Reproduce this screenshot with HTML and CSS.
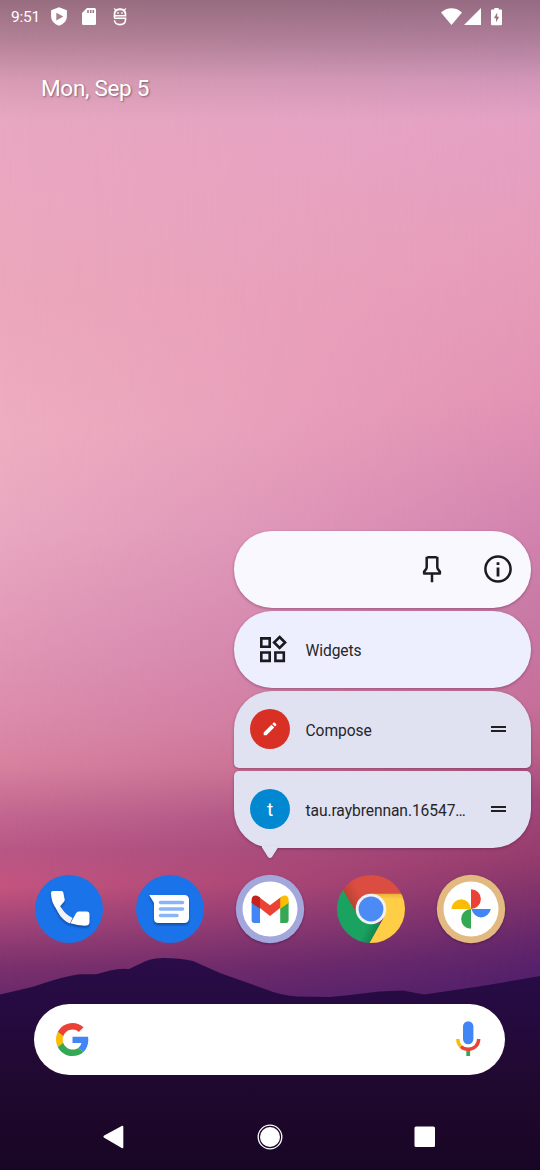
FILE: index.html
```html
<!DOCTYPE html>
<html lang="en">
<head>
<meta charset="utf-8">
<title>Home screen</title>
<link rel="stylesheet" href="styles.css">
</head>
<body>
<div class="phone">
  <div class="wallpaper">
    <div class="sky-right"></div>
    <svg class="hills" viewBox="0 0 540 1170">
      <defs><linearGradient id="hill" x1="0" y1="0" x2="0" y2="1">
        <stop offset="0" stop-color="#2a0c48"/><stop offset=".3" stop-color="#240a3e"/><stop offset=".6" stop-color="#20092f"/><stop offset="1" stop-color="#180524"/>
      </linearGradient></defs>
      <path fill="url(#hill)" d="M0 994.5 34 986.5 Q55 979 72 975.500 C82 973 88 975 97 974 L110 970.500 Q120 968 129 969 L146 961 Q153 958 164 958 Q180 958 193 961 L220 973 262 988 Q282 996 298 996.500 Q314 996.500 330 997 L350 995 379 991.500 403 990.500 424 994.500 482 986 540 976 V1170 H0Z"/>
    </svg>
    <div class="scrim"></div>
  </div>

  <header class="status">
    <span class="clock">9:51</span>
    <svg class="st-shield" width="16" height="19" viewBox="0 0 16 19"><path fill="#fff" d="M8 .3 15.900 3.200V9c0 4.600-3 8-7.900 9.800C3.100 17 .1 13.600.1 9V3.200Z"/><path fill="#a8808f" d="M5.300 5.800v7.600l7-3.800z"/></svg>
    <svg class="st-card" width="14" height="17" viewBox="0 0 14 17"><path fill="#fff" d="M5 0h7.500Q14 0 14 1.500v14Q14 17 12.500 17h-11Q0 17 0 15.500V5z"/><path stroke="#a17a89" stroke-width="1.600" d="M6 2v3M8.700 2v3M11.300 2v3"/></svg>
    <svg class="st-bug" width="14" height="18" viewBox="0 0 14 18"><path fill="#fff" d="M1.200 0 2.800 1.300Q4.600.3 7 .3T11.200 1.300L12.800 0 13.300.6 12.100 2.200Q13.300 3.600 13.300 5.700V8.400H.7V5.700Q.7 3.600 1.900 2.200L.7.600z"/><path fill="#a17a89" d="M2.300 6.900Q2.300 2.300 7 2.300t4.700 4.600z"/><path fill="#fff" d="M4.200 4.300h1.600v1.400H4.200zM8.200 4.300h1.600v1.400H8.200z"/><path fill="none" stroke="#fff" stroke-width="1.600" d="M1.500 8v1.400q0 .8.8.8h10.200v1.500c0 3-2.200 4.900-5.500 4.900s-5.500-1.900-5.500-4.300"/></svg>
    <span class="spacer"></span>
    <svg class="st-wifi" width="21" height="17" viewBox="0 0 21 17"><path fill="#fff" d="M0 4.600C6-1.300 15-1.300 21 4.600L10.500 17z"/></svg>
    <svg class="st-cell" width="17" height="17" viewBox="0 0 17 17"><path fill="#fff" d="M17 0v17H0z"/></svg>
    <svg class="st-batt" width="11" height="18" viewBox="0 0 11 18"><path fill="#fff" d="M3.300 0h4.400v1.500H10q1 0 1 1v13.700q0 1-1 1H1q-1 0-1-1V2.500q0-1 1-1h2.300z"/><path fill="#997583" d="M6.200 4.500 2.900 10.300H5V14.300L8.200 8.700H6.200z"/></svg>
  </header>

  <div class="date">Mon, Sep 5</div>

  <div class="popup">
    <div class="card card-top">
      <svg width="30" height="30" viewBox="0 0 30 30" fill="none" stroke="#1b1c1f" stroke-width="2.500"><path d="M10.300 3.300h9.400M9.700 2.800v10.400c0 2-1.400 2.800-2.600 4.500v1.700h15.800v-1.700c-1.200-1.700-2.600-2.500-2.600-4.500V2.800M15 19.500v8.800" stroke-linejoin="round"/></svg>
      <svg width="30" height="30" viewBox="0 0 30 30" fill="none" stroke="#1b1c1f" stroke-width="2.500"><circle cx="15" cy="15" r="12.600"/><path d="M15 13.500v9M15 8.200v2.900" stroke-width="2.800"/></svg>
    </div>
    <div class="card card-widgets">
      <span class="lead"><svg width="32" height="32" viewBox="0 0 32 32" fill="none" stroke="#191b1e" stroke-width="2.600"><path d="M4.300 5.400h8.400v8.400H4.300zM4.300 19.500h8.400v8.400H4.300zM18.400 19.500h8.400v8.400h-8.400zM22.600 4l5.500 5.500-5.500 5.500-5.500-5.500z"/></svg></span>
      <span class="label">Widgets</span>
    </div>
    <div class="card card-compose">
      <span class="lead disc red"><svg width="14" height="14" viewBox="0 0 14 14"><path fill="#fff" d="M.7 10.400 8.500 2.700l2.700 2.700-7.700 7.800H.7zM9.300 1.900l1.100-1.100q.7-.6 1.400 0l1.300 1.300q.6.700 0 1.400L12 4.600z"/></svg></span>
      <span class="label">Compose</span>
      <span class="grip"></span>
    </div>
    <div class="card card-account">
      <span class="lead disc blue">t</span>
      <span class="label">tau.raybrennan.16547…</span>
      <span class="grip"></span>
    </div>
    <svg class="tail" width="18" height="13" viewBox="0 0 18 13"><path fill="#e0e1f1" d="M1 0h16v1.500L11.300 10.500Q9 13.700 6.700 10.500L1 1.500z"/></svg>
  </div>

  <main class="dock">
    <svg class="app" viewBox="0 0 70 70">
      <circle cx="35" cy="35" r="34" fill="#1a73e8"/>
      <g class="drop"><path fill="#f1f2f4" d="M22.500 35.500 26 32c4 6 7 9 12.500 12l-2.500 5.500C30 47 25.500 42 22.500 35.500z"/><path fill="#fff" d="M19 17h8.500q1.500 0 1.800 1.500l1.400 7q.2 1.300-.7 2.200L23 36C19 31 17 25 17 19q0-2 2-2zM36.500 49.300l5.500-10q1-1.700 2.500-1.700h8q3 0 3 3v7.500q-.2 3.400-3 3.500-8 .3-16-2.300z"/></g>
    </svg>
    <svg class="app" viewBox="0 0 70 70">
      <circle cx="35" cy="35" r="34" fill="#1a73e8"/>
      <path class="drop" fill="#fff" d="M14.200 21H49q5 0 5 5v18q0 5-5 5H23.500q-4.500 0-4.500-4.500V29z"/>
      <path stroke="#8ab4f8" stroke-width="3.600" stroke-linecap="round" d="M25.500 28.500h22M25.500 35h22M25.500 41.500h16.500"/>
    </svg>
    <svg class="app ring" viewBox="0 0 70 70">
      <circle cx="35" cy="35" r="34.200" fill="#a4a7db"/><circle cx="35" cy="35" r="27.500" fill="#fff"/>
      <path fill="#4285f4" d="M16.600 27.500 25 34v15h-6q-2.400 0-2.400-2.400z"/><path fill="#34a853" d="M53.600 27.500 45.200 34v15h6q2.400 0 2.400-2.400z"/>
      <path fill="#ea4335" d="M24 23 35 31.200 46 23v10.300L35 42 24 33.300z"/>
      <path fill="#c5221f" d="M16.600 29v-3.300c0-4 4-5.400 7-3.200L25 23.600v11.100z"/><path fill="#fbbc04" d="M53.600 29v-3.300c0-4-4-5.400-7-3.200l-1.400 1.100v11.100z"/>
    </svg>
    <svg class="app" viewBox="0 0 70 70">
      <defs><clipPath id="disc"><circle cx="35" cy="35" r="34"/></clipPath>
      <linearGradient id="cr" gradientUnits="userSpaceOnUse" x1="12" y1="32" x2="26" y2="24"><stop offset="0" stop-color="#b23f30"/><stop offset="1" stop-color="#da4d40"/></linearGradient>
      <linearGradient id="cg" gradientUnits="userSpaceOnUse" x1="31" y1="51" x2="43" y2="57"><stop offset="0" stop-color="#1aa260"/><stop offset="1" stop-color="#12814b"/></linearGradient>
      <linearGradient id="cy" gradientUnits="userSpaceOnUse" x1="0" y1="19.700" x2="0" y2="25"><stop offset="0" stop-color="#e6b03b"/><stop offset="1" stop-color="#ffcd46"/></linearGradient></defs>
      <g clip-path="url(#disc)"><path fill="url(#cr)" d="M0 0h70v20H35L22 44 6 17z"/><path fill="url(#cg)" d="M7.300 16.500 22 42l13 7h10L33.500 70H0V17z"/><path fill="url(#cy)" d="M35 19.700h35V70H33L47.500 44z"/></g>
      <circle cx="35" cy="35" r="15.300" fill="#f1f1f1"/><circle cx="35" cy="35" r="12.400" fill="#4c8bf5"/>
    </svg>
    <svg class="app ring" viewBox="0 0 70 70">
      <circle cx="35" cy="35" r="34.200" fill="#e3b982"/><circle cx="35" cy="35" r="27.500" fill="#fff"/>
      <path fill="#ea4335" d="M35 15.200a9.900 9.900 0 0 1 0 19.800z"/><path fill="#4285f4" d="M54.800 35a9.900 10.800 0 0 1-19.300 0z"/><path fill="#34a853" d="M35 35v19.800a9.900 9.900 0 0 1 0-19.800z"/><path fill="#fbbc04" d="M15.300 35a9.900 10.800 0 0 1 19.700 0z"/>
    </svg>
  </main>

  <div class="search">
    <svg width="33" height="33" viewBox="0 0 48 48"><path fill="#EA4335" d="M24 9.500c3.540 0 6.710 1.220 9.210 3.600l6.850-6.850C35.900 2.380 30.470 0 24 0 14.620 0 6.510 5.380 2.560 13.220l7.980 6.190C12.430 13.720 17.740 9.500 24 9.500z"/><path fill="#4285F4" d="M46.980 24.550c0-1.570-.15-3.090-.38-4.550H24v9.020h12.940c-.58 2.960-2.260 5.480-4.780 7.180l7.730 6c4.510-4.180 7.090-10.360 7.090-17.650z"/><path fill="#FBBC05" d="M10.530 28.590c-.48-1.450-.76-2.990-.76-4.590s.27-3.140.76-4.590l-7.980-6.190C.92 16.460 0 20.120 0 24c0 3.880.92 7.540 2.560 10.780l7.970-6.190z"/><path fill="#34A853" d="M24 48c6.480 0 11.930-2.130 15.890-5.810l-7.730-6c-2.150 1.450-4.920 2.300-8.160 2.300-6.260 0-11.570-4.220-13.470-9.910l-7.980 6.190C6.510 42.620 14.620 48 24 48z"/></svg>
    <svg width="26" height="36" viewBox="0 0 26 36" fill="none"><rect x="8" y=".3" width="10.400" height="23" rx="5.200" fill="#4285f4"/><path stroke="#34a853" stroke-width="3.800" d="M13.200 29v6"/><path stroke="#ea4335" stroke-width="3.400" d="M23.700 18c0 6-4.500 10.300-10.500 10.300-3 0-5.600-1.100-7.400-2.800"/><path stroke="#fbbc04" stroke-width="3.400" d="M2.800 18c0 3 1 5.600 3.200 7.600"/></svg>
  </div>

  <nav class="nav">
    <svg width="22" height="24" viewBox="0 0 22 24"><path fill="#fff" d="M1.200 10.600 18.700.9q1.600-.8 1.600.9v20.400q0 1.700-1.600.9L1.200 12.800q-1.500-1.100 0-2.200z"/></svg>
    <svg width="26" height="26" viewBox="0 0 26 26"><circle cx="13" cy="13" r="11.800" fill="none" stroke="#fff" stroke-width="1.300"/><circle cx="13" cy="13" r="10" fill="#fff"/></svg>
    <svg width="22" height="22" viewBox="0 0 22 22"><rect x=".5" y=".5" width="20.500" height="20.500" rx="1.500" fill="#fff"/></svg>
  </nav>
</div>
</body>
</html>
```
FILE: styles.css
```css
* { box-sizing: border-box; }
body { margin: 0; font-family: Roboto, "Noto Sans", sans-serif; }
svg { display: block; flex: none; }

.phone { position: relative; width: 540px; height: 1170px; overflow: hidden; display: flex; flex-direction: column; }
.status, .date, .dock, .search, .nav { position: relative; }

/* wallpaper */
.wallpaper, .sky-right, .hills, .scrim { position: absolute; inset: 0; }
.wallpaper {
  background: linear-gradient(180deg, #dfa3bb 0, #e8a7c0 110px, #eba7c0 180px, #eca7bc 300px, #eeaec1 430px, #e9a8c0 530px, #e198b7 640px, #dc8bab 720px, #d8829f 765px, #c26690 815px, #b85785 850px, #c5547f 886px, #a04478 925px, #7c316d 965px, #6b2a6b 995px);
}
.sky-right {
  background: linear-gradient(176deg, #d99dba 0, #dca0c4 90px, #e4a1c4 150px, #e69cb9 300px, #e393b4 430px, #d586b0 540px, #c87aa6 640px, #c56f99 740px, #b96088 790px, #a0487c 835px, #963c6d 890px, #79306b 940px, #5e246a 985px, #52206a 1015px);
  -webkit-mask-image: linear-gradient(90deg, transparent 0, #000 100%);
  mask-image: linear-gradient(90deg, transparent 0, #000 100%);
}
.scrim { height: 120px; bottom: auto; background: linear-gradient(180deg, rgba(40,25,35,.39), rgba(40,25,35,.25) 40px, rgba(40,25,35,.08) 80px, transparent); }

/* status bar */
.status { height: 34px; display: flex; align-items: flex-start; padding: 8px 38px 0 11px; color: #fff; }
.clock { width: 40px; font-size: 15.500px; line-height: 18px; letter-spacing: -.2px; }
.st-shield { margin-top: -1px; }
.st-card { margin-left: 15px; }
.st-bug { margin-left: 17px; }
.spacer { flex: 1; }
.st-cell { margin-left: 2px; }
.st-batt { margin-left: 10px; }

.date { height: 841px; padding: 41px 0 0 41px; font-size: 22.500px; letter-spacing: -.3px; line-height: 26px; color: #fff; text-shadow: 1px 1px 2px rgba(0,0,0,.4); }

/* shortcut menu */
.popup { position: absolute; z-index: 2; left: 234px; top: 531px; width: 297px; display: flex; flex-direction: column; gap: 3px; }
.card { height: 77px; display: flex; align-items: center; padding: 0 25.500px 1px 16px; border-radius: 38px; box-shadow: 0 1px 3px rgba(60,10,50,.38); }
.card-top { background: #f9f8ff; justify-content: flex-end; gap: 36px; padding-right: 18px; }
.card-widgets { background: #edefff; }
.card-compose, .card-account { background: #e0e1f1; }
.card-compose { border-radius: 38px 38px 5px 5px; }
.card-account { border-radius: 5px 5px 38px 38px; }
.lead { width: 40px; height: 40px; display: flex; align-items: center; justify-content: center; margin-right: 15.500px; flex: none; }
.card-widgets .lead svg { margin-left: 5px; }
.disc { border-radius: 50%; color: #fff; font-size: 19px; }
.red { background: #d93025; }
.blue { background: #0288d1; }
.label { flex: 1; white-space: nowrap; font-size: 15.600px; letter-spacing: -.08px; line-height: 20px; padding-top: 3px; color: #25262a; }
.grip { width: 15px; height: 6px; border: solid #1f2023; border-width: 2px 0; }
.tail { position: absolute; left: 27px; top: 315px; filter: drop-shadow(0 1px 1px rgba(60,10,50,.25)); }

/* dock */
.dock { display: flex; justify-content: space-between; padding: 0 34px; height: 129.500px; margin-top: -1px; }
.app { width: 70px; height: 70px; }
.ring { filter: drop-shadow(0 1px 1px rgba(40,10,50,.45)); }
.drop { filter: drop-shadow(0 2px 1px rgba(0,20,80,.4)); }

.search { height: 70.600px; margin: .9px 34.600px 0 34.400px; padding: 0 24.500px 1px 22px; border-radius: 36px; background: #fff; display: flex; align-items: center; justify-content: space-between; }

.nav { flex: 1; display: flex; align-items: center; justify-content: space-between; padding: 29px 104px 0 103px; }
```
